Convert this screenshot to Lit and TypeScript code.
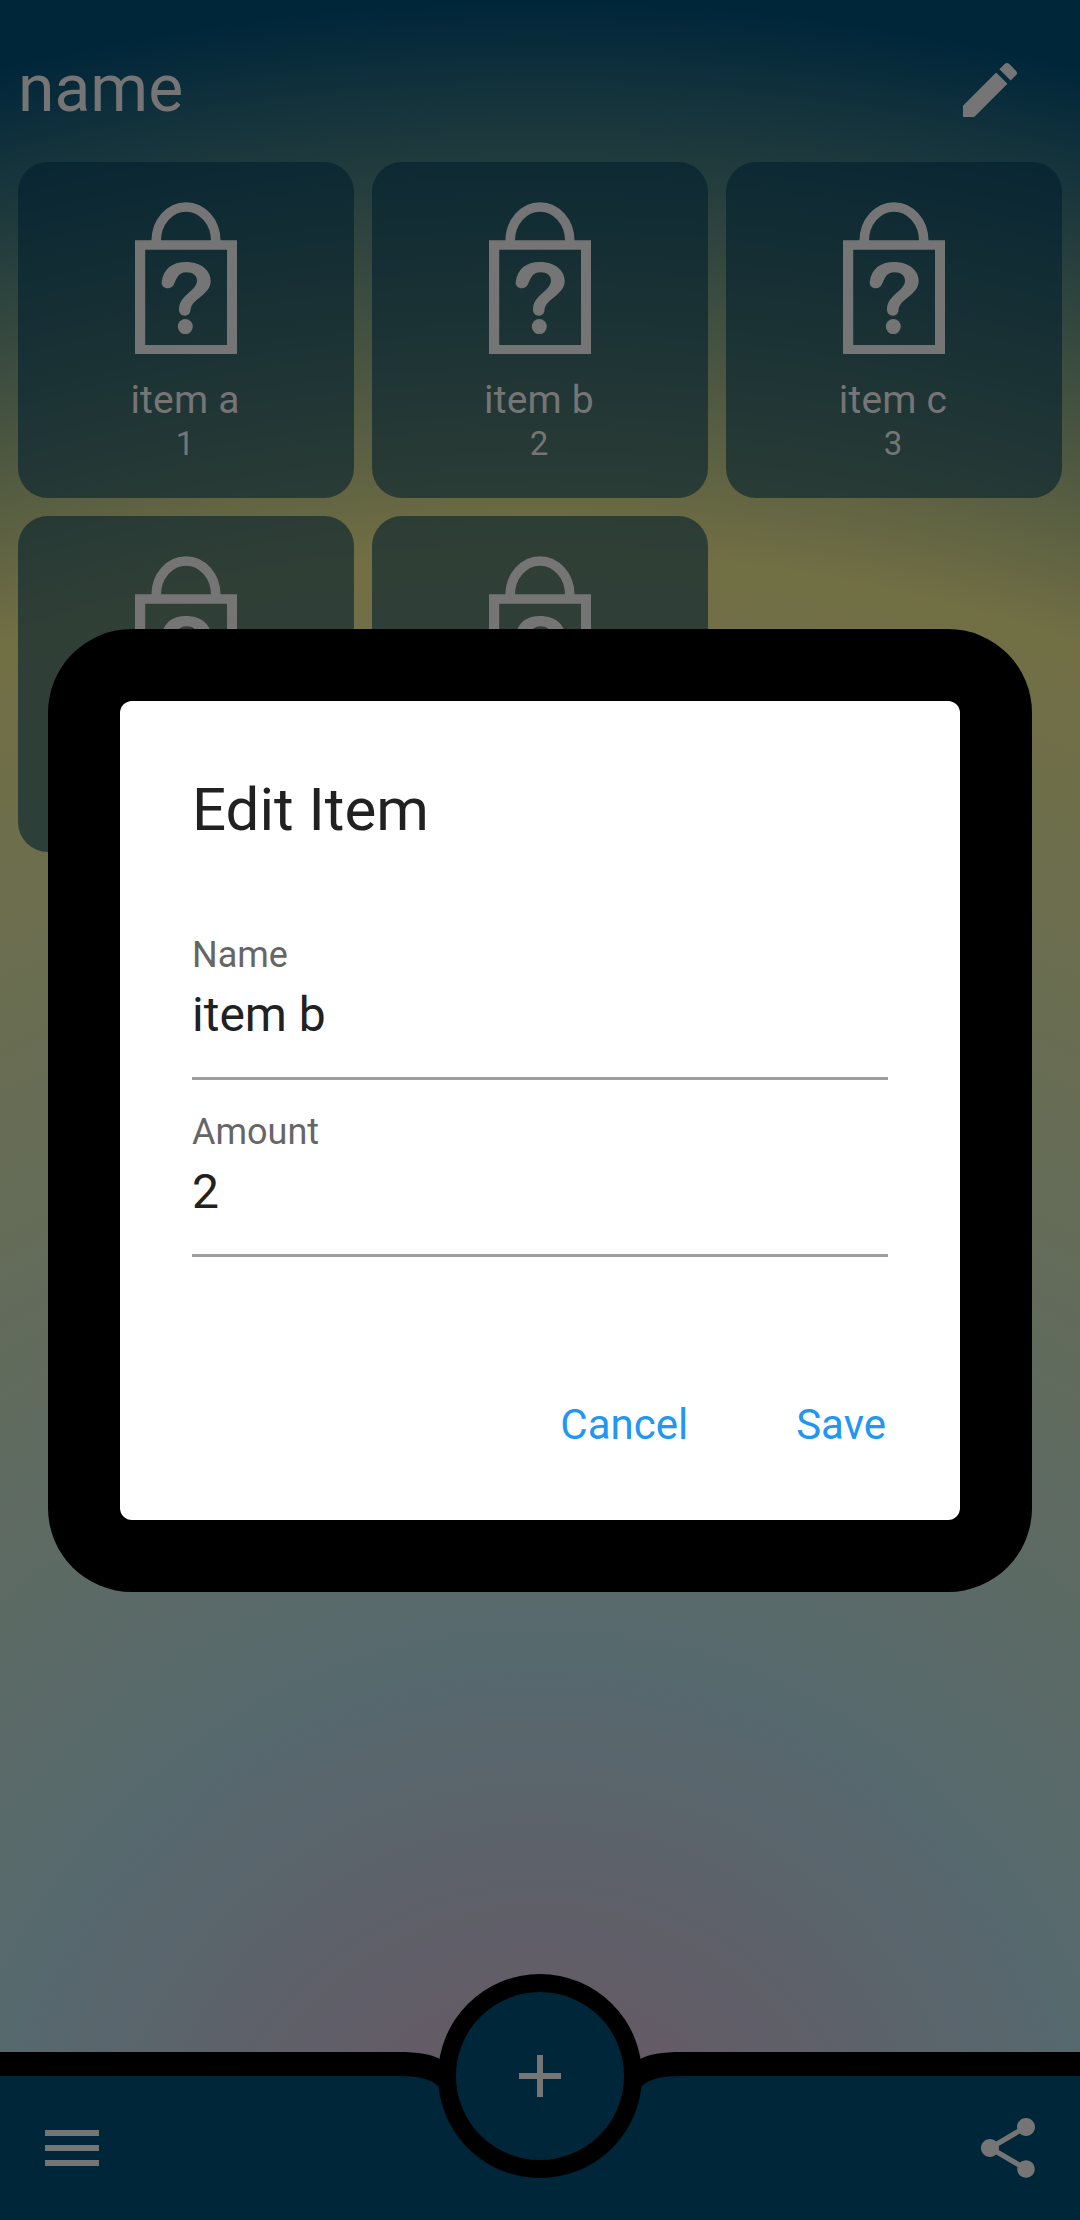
import { LitElement, html, css, svg } from "lit";
import { customElement, property } from "lit/decorators.js";

interface Item {
  name: string;
  amount: string;
}

const ITEMS: Item[] = [
  { name: "item a", amount: "1" },
  { name: "item b", amount: "2" },
  { name: "item c", amount: "3" },
  { name: "item d", amount: "4" },
  { name: "item e", amount: "5" },
];

const ICONS: Record<string, string> = {
  edit: "M3 17.25V21h3.75L17.81 9.94l-3.75-3.75L3 17.25zM20.71 7.04c.39-.39.39-1.02 0-1.41l-2.34-2.34c-.39-.39-1.02-.39-1.41 0l-1.83 1.83 3.75 3.75 1.83-1.83z",
  menu: "M3 18h18v-2H3v2zm0-5h18v-2H3v2zm0-7v2h18V6H3z",
  share:
    "M18 16.08c-.76 0-1.44.3-1.96.77L8.91 12.7c.05-.23.09-.46.09-.7s-.04-.47-.09-.7l7.05-4.11c.54.5 1.25.81 2.04.81 1.66 0 3-1.34 3-3s-1.34-3-3-3-3 1.34-3 3c0 .24.04.47.09.7L8.04 9.81C7.5 9.31 6.79 9 6 9c-1.66 0-3 1.34-3 3s1.34 3 3 3c.79 0 1.5-.31 2.04-.81l7.12 4.16c-.05.21-.08.43-.08.65 0 1.61 1.31 2.92 2.92 2.92 1.61 0 2.92-1.31 2.92-2.92s-1.31-2.92-2.92-2.92z",
  add: "M19 13h-6v6h-2v-6H5v-2h6V5h2v6h6v2z",
};

@customElement("app-icon")
export class AppIcon extends LitElement {
  @property() name = "add";

  static styles = css`
    :host {
      display: block;
      width: 72px;
      height: 72px;
      color: #757575;
    }
    .glyph {
      display: block;
      width: 100%;
      height: 100%;
      fill: currentColor;
    }
  `;

  render() {
    return html`<svg class="glyph" viewBox="0 0 24 24">
      ${svg`<path d=${ICONS[this.name]} />`}
    </svg>`;
  }
}

@customElement("item-card")
export class ItemCard extends LitElement {
  @property() name = "";
  @property() amount = "";

  static styles = css`
    :host {
      display: flex;
      flex-direction: column;
      align-items: center;
      box-sizing: border-box;
      height: 336px;
      padding-top: 39px;
      border-radius: 30px;
      background: rgba(0, 30, 44, 0.58);
      color: #757575;
    }
    .bag {
      display: block;
      width: 104px;
      height: 154px;
    }
    .name {
      margin-top: 22px;
      padding-right: 2px;
      font-size: 39px;
      line-height: 46px;
      letter-spacing: 0.2px;
    }
    .amount {
      margin-top: 1px;
      padding-right: 2px;
      font-size: 33px;
      line-height: 39px;
    }
  `;

  render() {
    return html`
      <svg class="bag" viewBox="0 0 104 154" fill="#757575">
        <path
          fill="none"
          stroke="#757575"
          stroke-width="9.6"
          d="M22.2 40A29.8 34 0 0 1 81.8 40"
        />
        <path fill-rule="evenodd" d="M1 39.2H103V153H1ZM11.2 48.7V144H93V48.7Z" />
        <path
          d="M27.7 80.7C29.5 68 38 61 52 61C67 61 76.7 69.5 76.7 80C76.7 94 57.5 97.5 56.5 109C56.3 112.5 54 114.7 51 114.7C47.5 114.7 45 112.5 45 108.5C45 94 63 90 63 79.5C63 74.5 58.8 71.3 52.7 71.3C43.5 71.3 42.5 78.5 39.7 83.8C38.5 86 36.5 87.3 34 87.3C30 87.3 27.2 84.5 27.7 80.7Z"
        />
        <circle cx="51.3" cy="125.6" r="7.5" />
      </svg>
      <div class="name">${this.name}</div>
      <div class="amount">${this.amount}</div>
    `;
  }
}

@customElement("text-field")
export class TextField extends LitElement {
  @property() label = "";
  @property() value = "";

  static styles = css`
    :host {
      display: block;
      box-sizing: border-box;
      height: 177px;
      padding-top: 31px;
      border-bottom: 3px solid #9e9e9e;
    }
    .label {
      font-size: 36px;
      line-height: 42px;
      color: #666;
    }
    .value {
      margin-top: 11px;
      font-size: 48px;
      line-height: 56px;
      color: #212121;
    }
  `;

  render() {
    return html`
      <div class="label">${this.label}</div>
      <div class="value">${this.value}</div>
    `;
  }
}

@customElement("app-root")
export class AppRoot extends LitElement {
  static styles = css`
    :host {
      display: block;
      position: relative;
      width: 1080px;
      height: 2220px;
      overflow: hidden;
      font-family: Roboto, "Liberation Sans", sans-serif;
      color: #757575;
    }
    .screen {
      display: flex;
      flex-direction: column;
      box-sizing: border-box;
      height: 2220px;
      background: radial-gradient(
        circle 2220px at 50% 100%,
        #6b5362 0%,
        #56696e 25%,
        #726f44 75%,
        #00263a 100%
      );
    }
    .header {
      display: flex;
      align-items: center;
      justify-content: space-between;
      box-sizing: border-box;
      height: 162px;
      padding: 18px 54px 0 18px;
    }
    .title {
      margin-bottom: 3px;
      font-size: 66px;
      line-height: 78px;
    }
    .grid {
      flex: 1;
      display: grid;
      grid-template-columns: repeat(3, 336px);
      gap: 18px;
      align-content: start;
      padding: 0 18px;
    }
    .bar {
      position: relative;
      display: flex;
      justify-content: space-between;
      align-items: flex-end;
      box-sizing: border-box;
      height: 246px;
      padding: 0 36px 36px;
    }
    .bar-shape {
      position: absolute;
      inset: 0;
      width: 1080px;
      height: 246px;
    }
    .bar-icon {
      position: relative;
    }
    .add {
      position: absolute;
      left: 504px;
      top: 66px;
    }
    .overlay {
      position: absolute;
      inset: 0;
      display: flex;
      align-items: center;
      justify-content: center;
    }
    .frame {
      padding: 72px;
      border-radius: 84px;
      background: #000;
    }
    .dialog {
      box-sizing: border-box;
      width: 840px;
      height: 819px;
      padding: 72px;
      border-radius: 12px;
      background: #fff;
    }
    .heading {
      height: 130.5px;
      font-size: 60px;
      line-height: 73px;
      color: #212121;
    }
    .actions {
      display: flex;
      justify-content: flex-end;
      gap: 108px;
      padding: 140px 2px 0 0;
      font-size: 42px;
      line-height: 56px;
      color: #2196f3;
    }
  `;

  render() {
    return html`
      <div class="screen">
        <div class="header">
          <div class="title">name</div>
          <app-icon name="edit"></app-icon>
        </div>
        <div class="grid">
          ${ITEMS.map(
            (item) => html`<item-card .name=${item.name} .amount=${item.amount}></item-card>`,
          )}
        </div>
        <div class="bar">
          <svg class="bar-shape" viewBox="0 0 1080 246">
            <path
              d="M0 78H398C418 78 432 80.5 440 85H640C648 80.5 662 78 682 78H1080V246H0Z"
            />
            <circle cx="540" cy="102" r="102" />
            <path
              fill="#00263a"
              d="M0 102H398C418 102 432 105 438.54 112.5A102 102 0 0 0 641.46 112.5C648 105 662 102 682 102H1080V246H0Z"
            />
            <circle cx="540" cy="102" r="84" fill="#00263a" />
          </svg>
          <app-icon class="bar-icon" name="menu"></app-icon>
          <app-icon class="add" name="add"></app-icon>
          <app-icon class="bar-icon" name="share"></app-icon>
        </div>
      </div>
      <div class="overlay">
        <div class="frame">
          <div class="dialog">
            <div class="heading">Edit Item</div>
            <text-field label="Name" value="item b"></text-field>
            <text-field label="Amount" value="2"></text-field>
            <div class="actions">
              <span>Cancel</span>
              <span>Save</span>
            </div>
          </div>
        </div>
      </div>
    `;
  }
}
